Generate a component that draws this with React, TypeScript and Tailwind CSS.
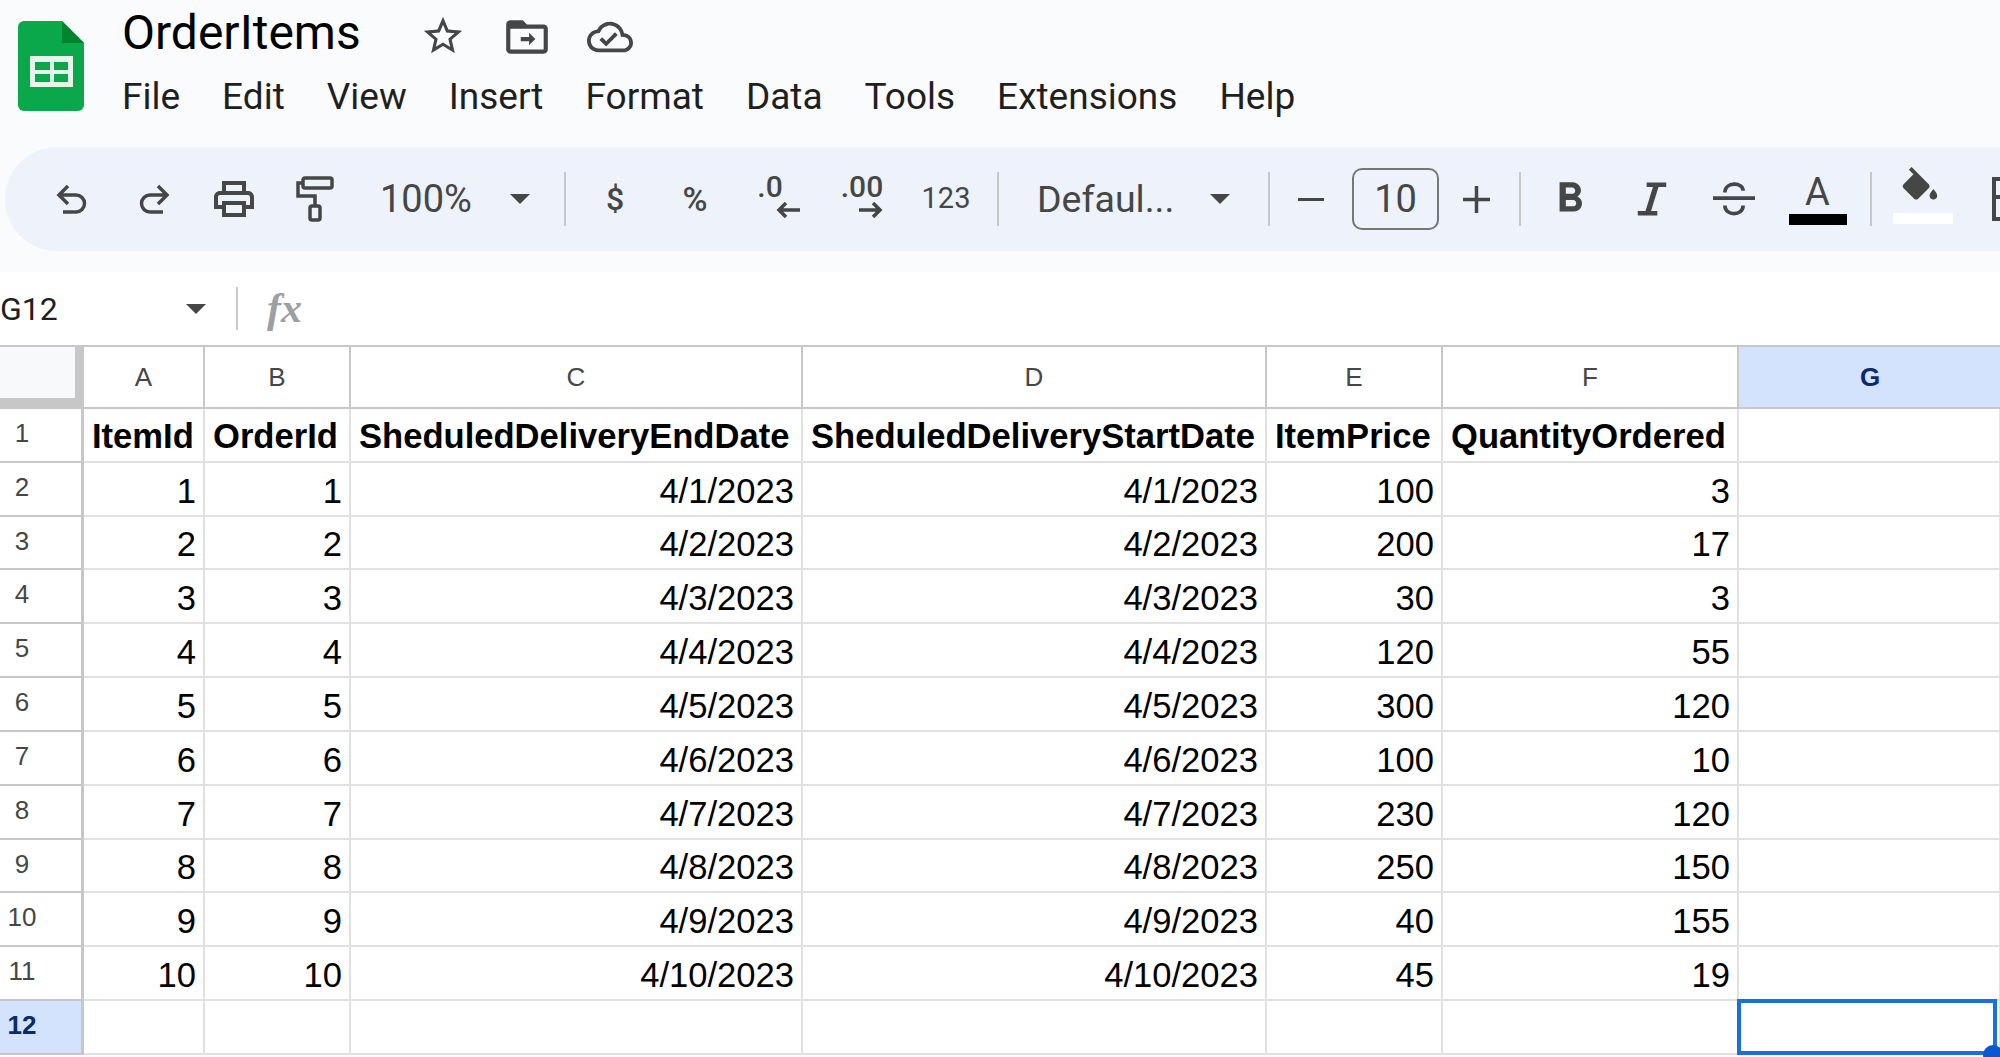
import React from "react";

const C = "#444746";

function Ico({ d, size = 46, vb = 24, cls = "" }: { d: string; size?: number; vb?: number; cls?: string }) {
  return (
    <svg width={size} height={size} viewBox={`0 0 ${vb} ${vb}`} className={cls} fill={C}>
      <path d={d} fillRule="evenodd" />
    </svg>
  );
}

function Caret({ color = C }: { color?: string }) {
  return (
    <svg width="22" height="12" viewBox="0 0 22 12">
      <path d="M1 1h20L11 11z" fill={color} />
    </svg>
  );
}

function Sep({ cls }: { cls: string }) {
  return <div className={`w-[2px] h-[54px] bg-[#c7c7c7] shrink-0 ${cls}`} />;
}

function Item({ w, children, cls = "" }: { w: string; children: React.ReactNode; cls?: string }) {
  return <div className={`${w} flex items-center justify-center shrink-0 ${cls}`}>{children}</div>;
}

const menu = ["File", "Edit", "View", "Insert", "Format", "Data", "Tools", "Extensions", "Help"];

const rows: (string | number)[][] = [
  [1, 1, "4/1/2023", "4/1/2023", 100, 3],
  [2, 2, "4/2/2023", "4/2/2023", 200, 17],
  [3, 3, "4/3/2023", "4/3/2023", 30, 3],
  [4, 4, "4/4/2023", "4/4/2023", 120, 55],
  [5, 5, "4/5/2023", "4/5/2023", 300, 120],
  [6, 6, "4/6/2023", "4/6/2023", 100, 10],
  [7, 7, "4/7/2023", "4/7/2023", 230, 120],
  [8, 8, "4/8/2023", "4/8/2023", 250, 150],
  [9, 9, "4/9/2023", "4/9/2023", 40, 155],
  [10, 10, "4/10/2023", "4/10/2023", 45, 19],
];
const heads = ["ItemId", "OrderId", "SheduledDeliveryEndDate", "SheduledDeliveryStartDate", "ItemPrice", "QuantityOrdered"];

const colHead = "flex items-center justify-center border-r-2 border-b-2 border-[#c7c7c7] text-[26px] text-[#444746] bg-white";
const rowHead = "border-r-[3px] border-b-2 border-[#c7c7c7] bg-white text-[26px] text-[#444746]";
const cell = "border-r-2 border-b-2 border-[#e1e1e1] text-[34.6px] leading-[40px] text-black flex items-end overflow-hidden whitespace-nowrap";

export default function App() {
  return (
    <div className="w-[2000px] h-[1057px] overflow-hidden bg-white font-['Roboto',sans-serif] flex flex-col">
      <div className="h-[272px] bg-[#f9fbfd] shrink-0 flex flex-col">
        <div className="h-[147px] flex pl-[18px] pt-[21px]">
          <svg width="66" height="90" viewBox="0 0 66 90" className="shrink-0">
            <path d="M6 0H44L66 22V84a6 6 0 0 1-6 6H6a6 6 0 0 1-6-6V6a6 6 0 0 1 6-6z" fill="#0aa84b" />
            <path d="M44 0L66 22H44z" fill="#00832d" />
            <rect x="12" y="35" width="43" height="31" fill="#e6f5ea" />
            <rect x="17" y="41" width="15" height="8" fill="#0aa84b" />
            <rect x="36" y="41" width="14" height="8" fill="#0aa84b" />
            <rect x="17" y="53" width="15" height="8" fill="#0aa84b" />
            <rect x="36" y="53" width="14" height="8" fill="#0aa84b" />
          </svg>
          <div className="ml-[38px] -mt-[21px] flex flex-col">
            <div className="h-[66px] flex items-center">
              <span className="text-[48px] leading-[56px] text-black w-[298px]">OrderItems</span>
              <Ico size={46} cls="mt-[6px]" d="M22 9.24l-7.19-.62L12 2 9.19 8.63 2 9.24l5.46 4.73L5.82 21 12 17.27 18.18 21l-1.63-7.03L22 9.24zM12 15.4l-3.76 2.27 1-4.28-3.32-2.88 4.38-.38L12 6.1l1.71 4.04 4.38.38-3.32 2.88 1 4.28L12 15.4z" />
              <Ico size={50} cls="ml-[36px] mt-[8px]" d="M20 6h-8l-2-2H4c-1.1 0-1.99.9-1.99 2L2 18c0 1.1.9 2 2 2h16c1.1 0 2-.9 2-2V8c0-1.1-.9-2-2-2zm0 12H4V8h16v10zm-7-2l3-3-3-3v2H9v2h4v2z" />
              <Ico size={46} cls="ml-[35px] mt-[8px]" d="M19.35 10.04C18.67 6.59 15.64 4 12 4 9.11 4 6.6 5.64 5.35 8.04 2.34 8.36 0 10.91 0 14c0 3.31 2.69 6 6 6h13c2.76 0 5-2.24 5-5 0-2.64-2.05-4.78-4.65-4.96zM19 18H6c-2.21 0-4-1.79-4-4 0-2.05 1.53-3.76 3.56-3.97l1.07-.11.5-.95C8.08 7.14 9.94 6 12 6c2.62 0 4.88 1.86 5.39 4.43l.3 1.5 1.53.11c1.56.1 2.78 1.41 2.78 2.96 0 1.65-1.35 3-3 3zm-9-3.82l-2.09-2.09L6.5 13.5 10 17l6.01-6.01-1.41-1.41z" />
            </div>
            <div className="flex gap-[42px] mt-[9px] text-[37px] leading-[44px] text-[#1f1f1f]">
              {menu.map((m) => (
                <span key={m}>{m}</span>
              ))}
            </div>
          </div>
        </div>
        <div className="ml-[5px] w-[2100px] h-[104px] rounded-l-[52px] bg-[#eef2fa] flex items-center pl-[28px] text-[#444746] shrink-0 overflow-hidden">
          <Item w="w-[80px]">
            <svg width="40" height="40" viewBox="0 0 40 40" fill="none" stroke={C} strokeWidth="3.5">
              <path d="M15 7L6 16l9 9M6 16h17a8 8 0 0 1 0 17H10" />
            </svg>
          </Item>
          <Item w="w-[80px]">
            <svg width="40" height="40" viewBox="0 0 40 40" fill="none" stroke={C} strokeWidth="3.5">
              <path d="M25 7l9 9-9 9M34 16H17a8 8 0 0 0 0 17h13" />
            </svg>
          </Item>
          <Item w="w-[82px]">
            <Ico size={48} d="M19 8h-1V3H6v5H5c-1.66 0-3 1.34-3 3v6h4v4h12v-4h4v-6c0-1.66-1.34-3-3-3zM8 5h8v3H8V5zm8 12v2H8v-4h8v2zm2-2v-2H6v2H4v-4c0-.55.45-1 1-1h14c.55 0 1 .45 1 1v4h-2z" />
          </Item>
          <Item w="w-[80px]">
            <svg width="38" height="46" viewBox="0 0 38 46" fill="none" stroke={C} strokeWidth="3.5">
              <rect x="7" y="2" width="29" height="10" rx="2" />
              <path d="M7 7H2v13h17v10" />
              <rect x="14" y="30" width="10" height="14" rx="2" />
            </svg>
          </Item>
          <span className="ml-[25px] w-[120px] text-[38px]">100%</span>
          <Item w="w-[40px]"><Caret /></Item>
          <Sep cls="ml-[24px]" />
          <Item w="w-[80px]" cls="ml-[9px] text-[32px] font-medium">$</Item>
          <Item w="w-[80px]" cls="text-[34px] font-medium">%</Item>
          <Item w="w-[84px]">
            <div className="flex flex-col items-center -mt-[8px] -ml-[14px]">
              <span className="text-[30px] leading-[30px] font-medium">.0</span>
              <svg width="24" height="16" viewBox="0 0 24 16" className="ml-[36px]" fill="none" stroke={C} strokeWidth="3.5">
                <path d="M24 8H3M10 1L3 8l7 7" />
              </svg>
            </div>
          </Item>
          <Item w="w-[86px]">
            <div className="flex flex-col items-center -mt-[8px]">
              <span className="text-[30px] leading-[30px] font-medium">.00</span>
              <svg width="24" height="16" viewBox="0 0 24 16" className="ml-[18px]" fill="none" stroke={C} strokeWidth="3.5">
                <path d="M0 8h21M14 1l7 7-7 7" />
              </svg>
            </div>
          </Item>
          <Item w="w-[82px]" cls="text-[29px]">123</Item>
          <Sep cls="ml-[10px]" />
          <span className="ml-[38px] w-[170px] text-[37.5px]">Defaul...</span>
          <Item w="w-[26px]"><Caret /></Item>
          <Sep cls="ml-[35px]" />
          <Item w="w-[40px]" cls="ml-[21px]">
            <div className="w-[26px] h-[3px] bg-[#444746]" />
          </Item>
          <div className="ml-[21px] w-[87px] h-[62px] border-2 border-[#747775] rounded-[10px] flex items-center justify-center text-[38px] shrink-0">10</div>
          <Item w="w-[40px]" cls="ml-[17px]">
            <svg width="27" height="27" viewBox="0 0 27 27" stroke={C} strokeWidth="3.5">
              <path d="M0 13.5h27M13.5 0v27" />
            </svg>
          </Item>
          <Sep cls="ml-[23px]" />
          <Item w="w-[82px]" cls="ml-[8px]">
            <Ico size={50} d="M15.6 10.79c.97-.67 1.65-1.77 1.65-2.79 0-2.26-1.75-4-4-4H7v14h7.04c2.09 0 3.71-1.7 3.71-3.79 0-1.52-.86-2.82-2.15-3.42zM10 6.5h3c.83 0 1.5.67 1.5 1.5s-.67 1.5-1.5 1.5h-3v-3zm3.5 9H10v-3h3.5c.83 0 1.5.67 1.5 1.5s-.67 1.5-1.5 1.5z" />
          </Item>
          <Item w="w-[82px]">
            <svg width="32" height="36" viewBox="0 0 36 40" fill="none" stroke={C}>
              <path d="M12 4h22M2 36h22" strokeWidth="5" />
              <path d="M23 4L13 36" strokeWidth="6" />
            </svg>
          </Item>
          <Item w="w-[82px]">
            <svg width="42" height="38" viewBox="0 0 46 40" fill="none" stroke={C} strokeWidth="4">
              <path d="M0 19h46" />
              <path d="M13 13c0-12 20-12 20-2M13 27c0 12 20 12 20 0" />
            </svg>
          </Item>
          <Item w="w-[82px]" cls="pl-[3px]">
            <div className="flex flex-col items-center">
              <span className="text-[38px] leading-[44px] h-[44px] -mt-[4px]">A</span>
              <div className="w-[58px] h-[11px] bg-black" />
            </div>
          </Item>
          <Sep cls="ml-[13px]" />
          <Item w="w-[82px]" cls="ml-[10px]">
            <div className="flex flex-col items-center -mt-[8px]">
              <svg width="46" height="46" viewBox="0 0 24 24" className="-ml-[6px]" fill={C}>
                <path d="M16.56 8.94L7.62 0 6.21 1.41l2.38 2.38-5.15 5.15c-.59.59-.59 1.54 0 2.12l5.5 5.5c.29.29.68.44 1.06.44s.77-.15 1.06-.44l5.5-5.5c.59-.58.59-1.53 0-2.12zM19 11.5s-2 2.17-2 3.5c0 1.1.9 2 2 2s2-.9 2-2c0-1.33-2-3.5-2-3.5z" />
              </svg>
              <div className="w-[60px] h-[11px] bg-white" />
            </div>
          </Item>
          <div className="ml-[28px] w-[46px] h-[44px] border-[4px] border-[#444746] shrink-0 relative">
            <div className="absolute left-0 right-0 top-[14px] h-[4px] bg-[#444746]" />
          </div>
        </div>
      </div>

      <div className="h-[73px] shrink-0 flex items-center bg-white">
        <span className="w-[185px] text-[32px] text-[#1f1f1f]">G12</span>
        <Caret />
        <div className="ml-[29px] w-[2px] h-[43px] bg-[#c7c7c7]" />
        <span className="ml-[29px] font-['Liberation_Serif',serif] italic font-bold text-[42px] text-[#9aa0a6]">fx</span>
      </div>

      <div className="grid grid-cols-[84px_121px_146px_452px_464px_176px_296px_262px] grid-rows-[62px_repeat(12,53.83px)] border-t-2 border-[#c7c7c7] font-['Liberation_Sans',sans-serif]">
        <div className="bg-[#f8f9fa] border-r-[9px] border-b-[11px] border-[#c7c7c7]" />
        {["A", "B", "C", "D", "E", "F"].map((l) => (
          <div key={l} className={colHead}>{l}</div>
        ))}
        <div className="flex items-center justify-center border-b-2 border-[#c7c7c7] bg-[#d3e3fd] text-[26px] font-bold text-[#0b2a6b]">G</div>

        <div className={`${rowHead} w-full`}><div className="w-[44px] text-center leading-[48px]">1</div></div>
        {heads.map((h) => (
          <div key={h} className={`${cell} pb-[5px] pl-[8px] font-bold`}>{h}</div>
        ))}
        <div className={cell} />

        {rows.map((r, i) => (
          <React.Fragment key={i}>
            <div className={rowHead}><div className="w-[44px] text-center leading-[48px]">{i + 2}</div></div>
            {r.map((v, j) => (
              <div key={j} className={`${cell} pb-[4px] justify-end pr-[7px]`}>{v}</div>
            ))}
            <div className={cell} />
          </React.Fragment>
        ))}

        <div className="border-r-[3px] border-b-2 border-[#c7c7c7] bg-[#d3e3fd] text-[26px] font-bold text-[#0b2a6b]">
          <div className="w-[44px] text-center leading-[48px]">12</div>
        </div>
        {[0, 1, 2, 3, 4, 5].map((k) => (
          <div key={k} className={cell} />
        ))}
        <div className={`${cell} relative overflow-visible`}>
          <div className="absolute -left-[2px] -top-[2px] right-[2px] -bottom-[2px] border-[4px] border-[#1a6fe0]" />
          <div className="absolute -right-[4px] -bottom-[12px] w-[20px] h-[20px] rounded-full bg-[#0b57d0]" />
        </div>
      </div>
    </div>
  );
}
